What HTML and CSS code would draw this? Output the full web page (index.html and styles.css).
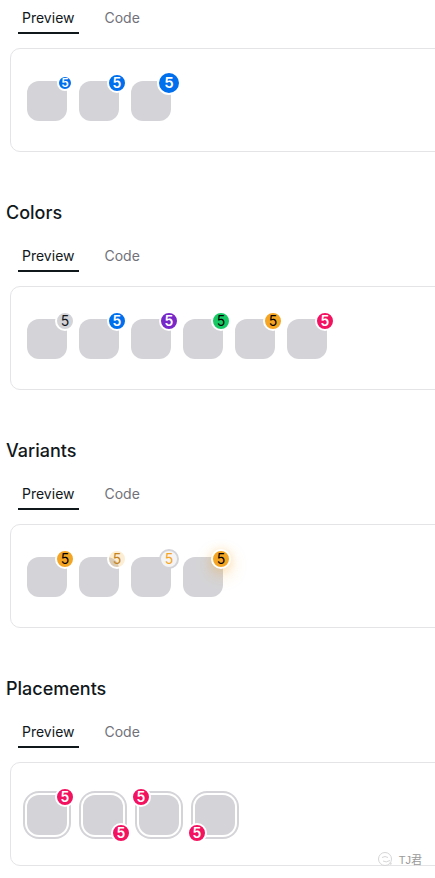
FILE: index.html
```html
<!DOCTYPE html>
<html lang="en">
<head>
<meta charset="utf-8">
<title>Badge</title>
<link rel="stylesheet" href="styles.css">
</head>
<body>
<div class="page">
  <section class="demo">
    <div class="tabs"><div class="tab active">Preview<span class="cursor"></span></div><div class="tab">Code</div></div>
    <div class="card">
      <div class="row">
        <div class="badge-wrap"><div class="avatar"></div><span class="badge sm primary tr white">5</span></div>
        <div class="badge-wrap"><div class="avatar"></div><span class="badge md primary tr white">5</span></div>
        <div class="badge-wrap"><div class="avatar"></div><span class="badge lg primary tr white">5</span></div>
      </div>
    </div>
  </section>

  <section class="demo">
    <h2>Colors</h2>
    <div class="tabs"><div class="tab active">Preview<span class="cursor"></span></div><div class="tab">Code</div></div>
    <div class="card">
      <div class="row">
        <div class="badge-wrap"><div class="avatar"></div><span class="badge md default tr">5</span></div>
        <div class="badge-wrap"><div class="avatar"></div><span class="badge md primary tr white">5</span></div>
        <div class="badge-wrap"><div class="avatar"></div><span class="badge md secondary tr white">5</span></div>
        <div class="badge-wrap"><div class="avatar"></div><span class="badge md success tr">5</span></div>
        <div class="badge-wrap"><div class="avatar"></div><span class="badge md warning tr">5</span></div>
        <div class="badge-wrap"><div class="avatar"></div><span class="badge md danger tr white">5</span></div>
      </div>
    </div>
  </section>

  <section class="demo">
    <h2>Variants</h2>
    <div class="tabs"><div class="tab active">Preview<span class="cursor"></span></div><div class="tab">Code</div></div>
    <div class="card">
      <div class="row">
        <div class="badge-wrap"><div class="avatar"></div><span class="badge md warning tr">5</span></div>
        <div class="badge-wrap"><div class="avatar"></div><span class="badge md flat-warning tr">5</span></div>
        <div class="badge-wrap"><div class="avatar"></div><span class="badge md faded-warning tr">5</span></div>
        <div class="badge-wrap"><div class="avatar"></div><span class="badge md warning shadow tr">5</span></div>
      </div>
    </div>
  </section>

  <section class="demo">
    <h2>Placements</h2>
    <div class="tabs"><div class="tab active">Preview<span class="cursor"></span></div><div class="tab">Code</div></div>
    <div class="card">
      <div class="row wide">
        <div class="badge-wrap"><div class="avatar bordered"></div><span class="badge md danger tr white">5</span></div>
        <div class="badge-wrap"><div class="avatar bordered"></div><span class="badge md danger br white">5</span></div>
        <div class="badge-wrap"><div class="avatar bordered"></div><span class="badge md danger tl white">5</span></div>
        <div class="badge-wrap"><div class="avatar bordered"></div><span class="badge md danger bl white">5</span></div>
      </div>
    </div>
  </section>
</div>

<div class="watermark">
  <svg class="wm-icon" width="18" height="16" viewBox="0 0 18 16" aria-hidden="true">
    <circle cx="8" cy="8" r="6.5" fill="none" stroke="#d6d6d6" stroke-width="1"/>
    <path d="M5 6.5 Q8 4.5 11 6.5" fill="none" stroke="#d6d6d6" stroke-width="1"/>
    <path d="M6 10 Q9 12 13 9.5" fill="none" stroke="#d6d6d6" stroke-width="1"/>
    <circle cx="13.5" cy="12.5" r="1.2" fill="#dcdcdc"/>
  </svg>
  <span class="wm-text">TJ君</span>
</div>
</body>
</html>
```

FILE: styles.css
```css
html, body {
  margin: 0;
  padding: 0;
  background: #ffffff;
  overflow: hidden;
}

body {
  position: relative;
  width: 435px;
  height: 878px;
  font-family: Inter, "Noto Sans", "Noto Sans CJK SC", sans-serif;
  color: #11181c;
}

.page {
  width: 435px;
  height: 878px;
  overflow: hidden;
  box-sizing: border-box;
  padding-left: 6px;
}

.demo:first-child {
  margin-top: -2px;
}

.demo + .demo {
  margin-top: 47.5px;
}

h2 {
  margin: 0 0 9px;
  font-size: 18px;
  line-height: 28px;
  font-weight: 500;
  color: #11181c;
}

.tabs {
  display: flex;
  gap: 6px;
  height: 40px;
  padding: 4px;
  box-sizing: border-box;
}

.tab {
  position: relative;
  height: 32px;
  padding: 0 12px;
  display: flex;
  align-items: center;
  font-size: 14px;
  line-height: 20px;
  color: #71717a;
}

.tab.active {
  color: #11181c;
}

.cursor {
  position: absolute;
  left: 10%;
  bottom: 0;
  width: 80%;
  height: 2px;
  background: #11181c;
}

.card {
  width: 640px;
  flex-shrink: 0;
  height: 104px;
  margin: 9.5px 0 0 4px;
  padding: 2px 16px 0;
  box-sizing: border-box;
  border: 1px solid #e4e4e7;
  border-radius: 10px;
  display: flex;
  align-items: center;
}

.row {
  display: flex;
  gap: 12px;
}

.row.wide {
  gap: 16px;
}

.badge-wrap {
  position: relative;
  display: inline-flex;
}

.avatar {
  width: 40px;
  height: 40px;
  border-radius: 12px;
  background: #d4d4d8;
}

.avatar.bordered {
  box-shadow: 0 0 0 2px #ffffff, 0 0 0 4px #d4d4d8;
}

.badge {
  position: absolute;
  z-index: 1;
  display: flex;
  align-items: center;
  justify-content: center;
  box-sizing: border-box;
  border: 2px solid #ffffff;
  border-radius: 9999px;
  line-height: 1;
  font-weight: 400;
  color: #000000;
}

.badge.white {
  color: #ffffff;
  font-weight: 600;
}

.sm { width: 16px; height: 16px; font-size: 12px; }
.md { width: 20px; height: 20px; font-size: 14px; }
.lg { width: 24px; height: 24px; font-size: 15px; }

.tr { top: 5%; right: 5%; transform: translate(50%, -50%); }
.br { bottom: 5%; right: 5%; transform: translate(50%, 50%); }
.tl { top: 5%; left: 5%; transform: translate(-50%, -50%); }
.bl { bottom: 5%; left: 5%; transform: translate(-50%, 50%); }

.default { background: #d4d4d8; color: #11181c; }
.primary { background: #006fee; }
.secondary { background: #7828c8; }
.success { background: #17c964; }
.warning { background: #f5a524; }
.danger { background: #f31260; }

.flat-warning {
  background: rgba(245, 165, 36, 0.2);
  color: #c4841d;
}

.faded-warning {
  background: #f4f4f5;
  border-color: #d4d4d8;
  color: #f5a524;
}

.shadow {
  box-shadow: 0 6px 16px 0 rgba(245, 165, 36, 0.35), 0 0 8px 0 rgba(245, 165, 36, 0.2);
}

.watermark {
  position: absolute;
  right: 13px;
  bottom: 11px;
  display: flex;
  align-items: center;
  gap: 4px;
}

.wm-text {
  font-family: "Liberation Sans", "Noto Sans CJK SC", sans-serif;
  font-size: 11px;
  color: #9a9a9a;
}
```
